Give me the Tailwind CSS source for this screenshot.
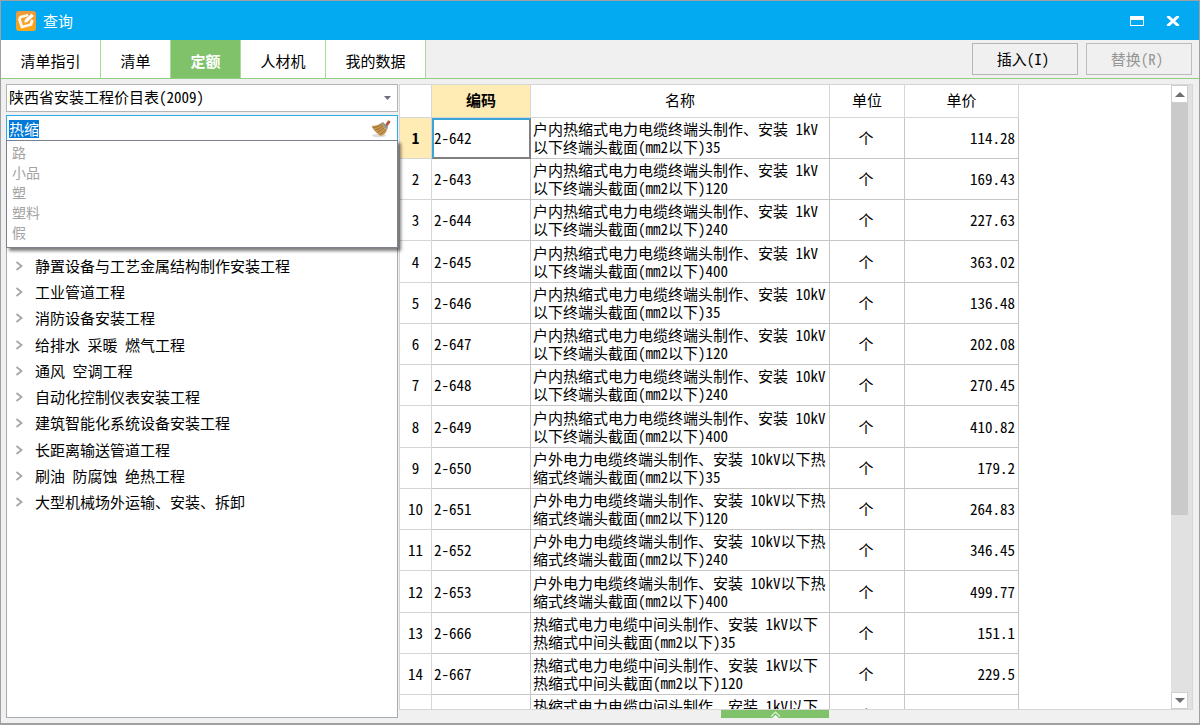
<!DOCTYPE html>
<html lang="zh-CN">
<head>
<meta charset="utf-8">
<title>查询</title>
<script src="https://cdn.jsdelivr.net/npm/@tailwindcss/browser@4"></script>
</head>
<body class="h-screen overflow-hidden font-['Noto_Sans_Mono_CJK_SC','Noto_Sans_CJK_SC',monospace] text-[15px] leading-[18px] text-black">
<div class="flex h-full flex-col border border-b-2 border-[#a0a0a0] bg-[#f0f0f0]">
  <header class="flex h-[39px] shrink-0 items-center bg-[#03a9f1] pr-4 pl-[15px] text-white">
    <svg class="size-5" viewBox="0 0 20 20" aria-hidden="true">
      <defs><linearGradient id="logo" x1="0" y1="0" x2="0" y2="1"><stop offset="0" stop-color="#ee9a3c"/><stop offset="1" stop-color="#f9a61a"/></linearGradient></defs>
      <rect width="20" height="20" rx="3" fill="url(#logo)"/>
      <path d="M11 4.500 4.500 6 3.500 8.500 6 16l9-2.500 1-3.500" fill="none" stroke="#fff8ea" stroke-width="2.800" stroke-linejoin="round" stroke-linecap="round"/>
      <path d="m8 12 .8-3.500L15.500 2.500l2.500 2.500-6.500 6Z" fill="#fff" stroke="#f3ad58" stroke-width=".6"/>
    </svg>
    <h1 class="ml-[7px] grow">查询</h1>
    <button type="button" aria-label="最大化" class="flex size-5 items-center justify-center"><svg class="h-[10px] w-[14px]" viewBox="0 0 14 10"><path d="M0 0h14v10H0ZM1 4v5h12V4Z" fill="#fff" fill-rule="evenodd"/></svg></button>
    <button type="button" aria-label="关闭" class="ml-4 flex size-5 items-center justify-center"><svg class="h-[10px] w-[14px]" viewBox="0 0 14 10"><path d="M1.500 0 12.500 10M12.500 0 1.500 10" stroke="#fff" stroke-width="3"/></svg></button>
  </header>

  <div class="flex h-[39px] shrink-0 border-b border-[#8fcf7f]">
    <nav class="flex [&>button]:border-r [&>button]:border-[#a5dc98] [&>button]:bg-white [&>button]:pt-1">
      <button type="button" class="w-[100px]">清单指引</button>
      <button type="button" class="w-[70px]">清单</button>
      <button type="button" class="w-[70px] bg-[#80c269]! font-bold text-white">定额</button>
      <button type="button" class="w-[85px]">人材机</button>
      <button type="button" class="w-[100px]">我的数据</button>
    </nav>
    <div class="ml-auto flex gap-2 py-[3px] pr-[7px]">
      <button type="button" class="w-[106px] border border-[#b5b5b5] pr-1">插入(I)</button>
      <button type="button" disabled class="w-[106px] border border-[#bcbcbc] pr-1 text-[#969696]">替换(R)</button>
    </div>
  </div>

  <main class="flex min-h-0 grow pt-[5px] pr-[6px] pb-[5px] pl-[5px]">
    <section class="relative flex w-[392px] shrink-0 flex-col">
      <div class="relative">
        <select aria-label="价目表" class="block h-7 w-full appearance-none border border-[#b4b4b4] bg-white px-[2px] pb-[2px]"><option>陕西省安装工程价目表(2009)</option></select>
        <svg class="pointer-events-none absolute top-3 right-[7px] h-1 w-[7px]" viewBox="0 0 7 4"><path d="M0 0h7L3.500 4Z" fill="#6b7078"/></svg>
      </div>
      <div class="mt-[3px] flex h-[26px] shrink-0 items-center border border-b-0 border-[#29ade8] bg-white pr-[6px] pl-[2px]">
        <input id="q" type="text" value="热缩" aria-label="搜索" class="h-[18px] min-w-0 grow outline-none selection:bg-[#0078d7] selection:text-white">
        <button type="button" aria-label="清除" class="size-5"><svg viewBox="0 0 20 20">
          <ellipse cx="8" cy="16.500" rx="7" ry="1.800" fill="#ddd"/>
          <path d="m14 6 3-4.500q2-.5 2.500 1.500L16 8Z" fill="#b5563a"/>
          <path d="m10 4 2-1 5 5-1 3Z" fill="#8e9499"/>
          <path d="M10 4Q6 7 .5 7q2 5 9 10 5-1 6.500-6Z" fill="#c99a55"/>
          <path d="M2 8.500q5 0 9-3M4 11q5-1 8-4M6 13.500q4-2 7.500-5M8.500 15.500q4-2 6-5" fill="none" stroke="#8f6526" stroke-width=".8"/>
        </svg></button>
      </div>
      <ul class="grow border border-[#a5abb3] bg-white pt-[111px] [&>li]:flex [&>li]:h-[26px] [&>li]:items-center [&>li]:gap-[11px] [&>li]:pl-2 [&>li:nth-child(4n)]:h-[27px]" id="tree"></ul>
      <ul class="absolute top-[56px] left-0 h-[108px] w-full border border-[#7d828a] bg-white px-[5px] pt-px text-[14px] leading-5 text-[#a3a3a3] shadow-[3px_3px_3px_#00000080]">
        <li>路</li><li>小品</li><li>塑</li><li>塑料</li><li>假</li>
      </ul>
    </section>

    <section class="ml-px flex min-w-0 grow flex-col">
      <div class="flex min-h-0 grow border border-[#d6d6d6] bg-white">
        <div class="min-w-0 grow overflow-hidden">
          <table class="w-[619px] table-fixed border-separate border-spacing-0 [&_td]:border-r [&_td]:border-b [&_td]:border-[#c6c6c6] [&_td]:p-0 [&_th]:border-r [&_th]:border-b [&_th]:border-[#d6d6d6] [&_th]:p-0">
            <colgroup><col class="w-8"><col class="w-[99px]"><col class="w-[299px]"><col class="w-[75px]"><col class="w-[114px]"></colgroup>
            <thead><tr class="h-[33px] [&>th]:pb-[2px] [&>th]:font-normal"><th></th><th class="bg-[#ffebb4] font-bold!">编码</th><th>名称</th><th>单位</th><th>单价</th></tr></thead>
            <tbody id="rows" class="[&>tr]:h-[41px] [&>tr:nth-child(4n)]:h-[42px]"></tbody>
          </table>
        </div>
        <div class="flex w-[21px] shrink-0 flex-col bg-[#e1e1e1] pr-1">
          <button type="button" aria-label="向上滚动" class="flex h-[18px] shrink-0 items-center justify-center border border-[#cfcfcf] bg-white"><svg class="h-[5px] w-[10px]" viewBox="0 0 10 5"><path d="M0 5h10L5 0Z" fill="#6d6f75"/></svg></button>
          <div class="grow"><div class="h-[70%] bg-[#cacaca]"></div></div>
          <button type="button" aria-label="向下滚动" class="flex h-[17px] shrink-0 items-center justify-center border border-[#cfcfcf] bg-white"><svg class="h-[5px] w-[10px]" viewBox="0 0 10 5"><path d="M0 0h10L5 5Z" fill="#6d6f75"/></svg></button>
        </div>
      </div>
      <button type="button" aria-label="展开" class="ml-[322px] flex h-2 w-[108px] shrink-0 items-center justify-center bg-[#80c269]"><svg class="h-[7px] w-[11px]" viewBox="0 0 11 7"><path d="M1 5.500 5.500 1 10 5.500" fill="none" stroke="#d9f0d0" stroke-width="1.200"/><path d="M2.500 7 5.500 4l3 3Z" fill="#fff"/></svg></button>
    </section>
  </main>
</div>
<script>
const tree = ['静置设备与工艺金属结构制作安装工程','工业管道工程','消防设备安装工程','给排水 采暖 燃气工程','通风 空调工程','自动化控制仪表安装工程','建筑智能化系统设备安装工程','长距离输送管道工程','刷油 防腐蚀 绝热工程','大型机械场外运输、安装、拆卸'];
document.getElementById('tree').innerHTML = tree.map(t => `<li><svg class="h-[10px] w-[9px]" viewBox="0 0 9 10"><path d="M1.500 1 6.500 5 1.500 9" fill="none" stroke="#a6a6a6" stroke-width="1.800"/></svg><span>${t}</span></li>`).join('');
const inner = '户内热缩式电力电缆终端头制作、安装 ';
const rows = [
  ['2-642', inner + '1kV<br>以下终端头截面(mm2以下)35', '114.28'],
  ['2-643', inner + '1kV<br>以下终端头截面(mm2以下)120', '169.43'],
  ['2-644', inner + '1kV<br>以下终端头截面(mm2以下)240', '227.63'],
  ['2-645', inner + '1kV<br>以下终端头截面(mm2以下)400', '363.02'],
  ['2-646', inner + '10kV<br>以下终端头截面(mm2以下)35', '136.48'],
  ['2-647', inner + '10kV<br>以下终端头截面(mm2以下)120', '202.08'],
  ['2-648', inner + '10kV<br>以下终端头截面(mm2以下)240', '270.45'],
  ['2-649', inner + '10kV<br>以下终端头截面(mm2以下)400', '410.82'],
  ['2-650', '户外电力电缆终端头制作、安装 10kV以下热<br>缩式终端头截面(mm2以下)35', '179.2'],
  ['2-651', '户外电力电缆终端头制作、安装 10kV以下热<br>缩式终端头截面(mm2以下)120', '264.83'],
  ['2-652', '户外电力电缆终端头制作、安装 10kV以下热<br>缩式终端头截面(mm2以下)240', '346.45'],
  ['2-653', '户外电力电缆终端头制作、安装 10kV以下热<br>缩式终端头截面(mm2以下)400', '499.77'],
  ['2-666', '热缩式电力电缆中间头制作、安装 1kV以下<br>热缩式中间头截面(mm2以下)35', '151.1'],
  ['2-667', '热缩式电力电缆中间头制作、安装 1kV以下<br>热缩式中间头截面(mm2以下)120', '229.5'],
  ['', '热缩式电力电缆中间头制作、安装 1kV以下<br>热缩式中间头截面(mm2以下)240', '']
];
document.getElementById('rows').innerHTML = rows.map(([code, name, price], i) => `<tr>
  <th scope="row" class="${i === 0 ? 'bg-[#ffebb4] font-bold' : 'font-normal'}">${code && i + 1}</th>
  <td class="${i === 0 ? 'border-[#808080]! shadow-[inset_2px_2px_#3ba6d6,inset_-1px_-1px_#808080]' : ''}"><span class="pl-[2px]">${code}</span></td>
  <td class="whitespace-nowrap"><div class="pl-[2px] leading-[18px]">${name}</div></td>
  <td class="pr-[2px]! text-center">个</td>
  <td class="text-right"><span class="pr-[3px]">${price}</span></td></tr>`).join('');
const q = document.getElementById('q');
q.focus();
q.select();
</script>
</body>
</html>
